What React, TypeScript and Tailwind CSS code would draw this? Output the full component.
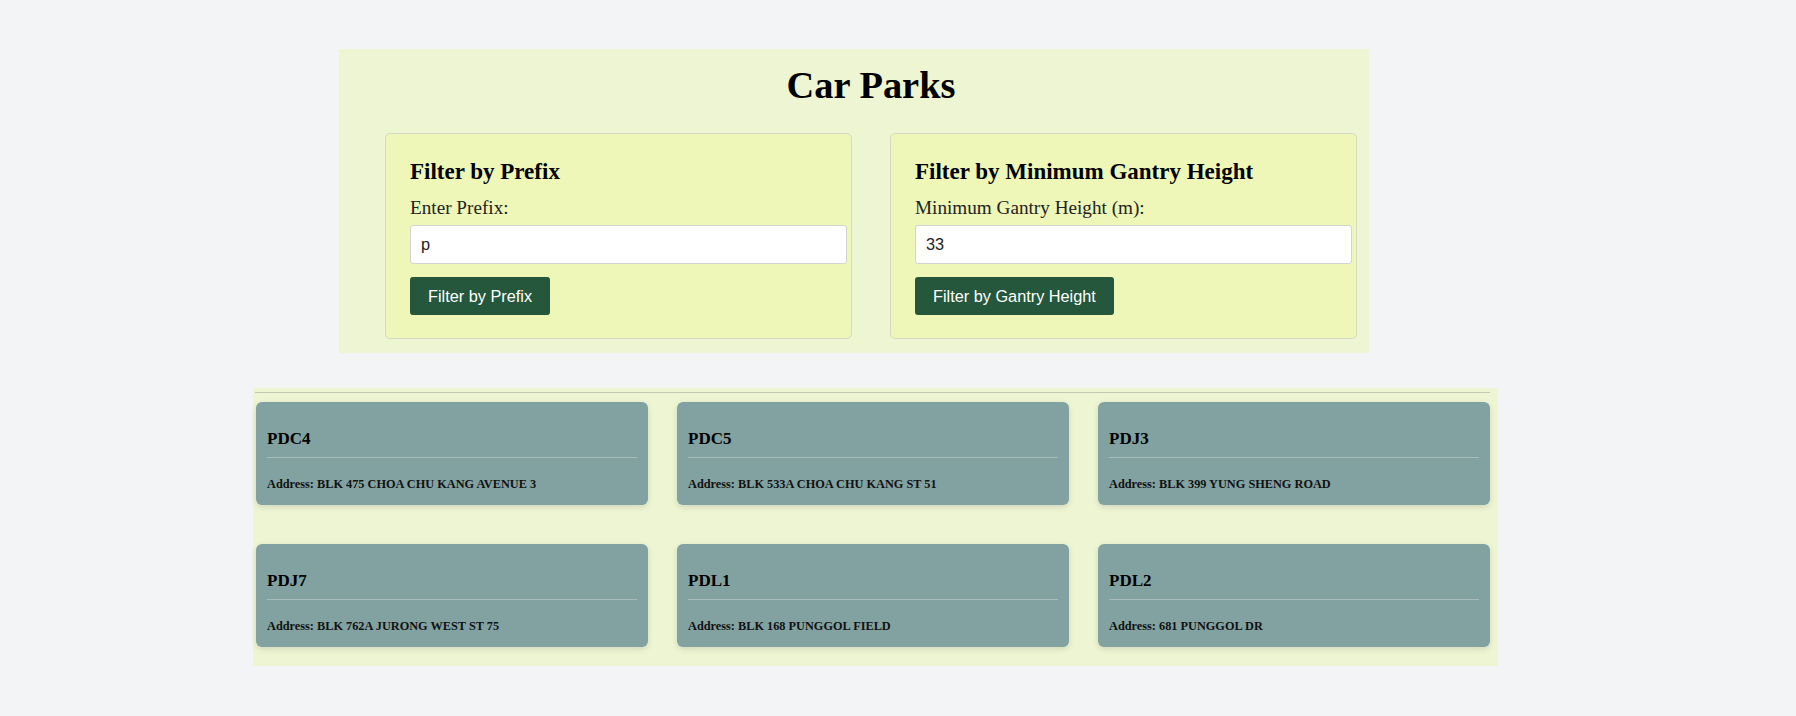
import React from "react";

const serif = { fontFamily: '"Liberation Serif", "Times New Roman", serif' };
const sans = { fontFamily: '"Liberation Sans", Arial, sans-serif' };

const parks = [
  { code: "PDC4", addr: "BLK 475 CHOA CHU KANG AVENUE 3" },
  { code: "PDC5", addr: "BLK 533A CHOA CHU KANG ST 51" },
  { code: "PDJ3", addr: "BLK 399 YUNG SHENG ROAD" },
  { code: "PDJ7", addr: "BLK 762A JURONG WEST ST 75" },
  { code: "PDL1", addr: "BLK 168 PUNGGOL FIELD" },
  { code: "PDL2", addr: "681 PUNGGOL DR" },
];

function FilterCard({
  title,
  label,
  value,
  button,
}: {
  title: string;
  label: string;
  value: string;
  button: string;
}) {
  return (
    <div className="w-[467px] shrink-0 rounded-[5px] border border-[#d6d9c4] bg-[#eef7b7] pl-[24px] pr-[4px] pt-[24px] pb-[23px]">
      <h3 className="text-[23px] leading-[27px] font-bold text-black" style={serif}>
        {title}
      </h3>
      <div className="mt-[12px] text-[19.2px] leading-[22px] text-[#222]" style={serif}>
        {label}
      </div>
      <input
        readOnly
        value={value}
        className="mt-[6px] block h-[39px] w-[437px] rounded-[3px] border border-[#d3d3d3] bg-white px-[10px] text-[16.3px] text-[#222] outline-none"
        style={sans}
      />
      <button
        className="mt-[13px] h-[38px] rounded-[3px] bg-[#24573b] px-[18px] text-[16.3px] text-white"
        style={sans}
      >
        {button}
      </button>
    </div>
  );
}

export default function App() {
  return (
    <div className="min-h-screen w-full bg-[#f3f4f6] pt-[49px] pb-[50px]" style={serif}>
      <div className="ml-[339px] w-[1030px] bg-[#edf5d3] pl-[46px] pt-[14px] pb-[14px]">
        <div className="w-[972px]">
          <h1 className="text-center text-[38.4px] leading-[44px] font-bold text-black" style={serif}>
            Car Parks
          </h1>
          <div className="mt-[26px] flex gap-[38px]">
            <FilterCard
              title="Filter by Prefix"
              label="Enter Prefix:"
              value="p"
              button="Filter by Prefix"
            />
            <FilterCard
              title="Filter by Minimum Gantry Height"
              label="Minimum Gantry Height (m):"
              value="33"
              button="Filter by Gantry Height"
            />
          </div>
        </div>
      </div>

      <div className="mt-[35px] ml-[253px] w-[1245px] bg-[#edf5d3] pt-[4px] pb-[19px]">
        <div className="ml-[2px] w-[1235px] h-px bg-[#c4c7b4]" />
        <div className="mt-[9px] ml-[3px] grid w-[1234px] grid-cols-3 gap-x-[29px] gap-y-[39px]">
          {parks.map((p) => (
            <div
              key={p.code}
              className="h-[103px] rounded-[6px] bg-[#81a2a1] px-[11px] pt-[27px] shadow-[0_2px_6px_rgba(0,0,0,0.12)]"
            >
              <h3 className="text-[17px] leading-[20px] font-bold text-black" style={serif}>
                {p.code}
              </h3>
              <div className="mt-[8px] h-px bg-[#a9bcbb]" />
              <div className="mt-[19px] text-[12.3px] leading-[15px] font-bold text-[#111]" style={serif}>
                Address: {p.addr}
              </div>
            </div>
          ))}
        </div>
      </div>
    </div>
  );
}
